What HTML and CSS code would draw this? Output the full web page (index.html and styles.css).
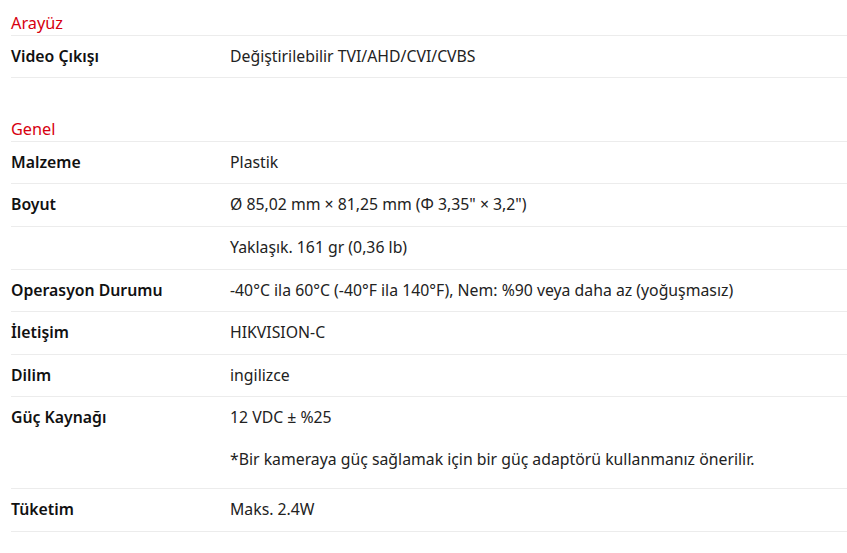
FILE: index.html
```html
<!DOCTYPE html>
<html lang="tr">
<head>
<meta charset="utf-8">
<link rel="stylesheet" href="styles.css">
</head>
<body>
<div class="specs">
  <section class="group">
    <h3 class="group-title">Arayüz</h3>
    <div class="row"><div class="label">Video Çıkışı</div><div class="value"><p>Değiştirilebilir TVI/AHD/CVI/CVBS</p></div></div>
  </section>
  <section class="group">
    <h3 class="group-title">Genel</h3>
    <div class="row"><div class="label">Malzeme</div><div class="value"><p>Plastik</p></div></div>
    <div class="row"><div class="label">Boyut</div><div class="value"><p>Ø 85,02 mm × 81,25 mm (Φ 3,35" × 3,2")</p></div></div>
    <div class="row"><div class="label"></div><div class="value"><p>Yaklaşık. 161 gr (0,36 lb)</p></div></div>
    <div class="row"><div class="label">Operasyon Durumu</div><div class="value"><p>-40°C ila 60°C (-40°F ila 140°F), Nem: %90 veya daha az (yoğuşmasız)</p></div></div>
    <div class="row"><div class="label">İletişim</div><div class="value"><p>HIKVISION-C</p></div></div>
    <div class="row"><div class="label">Dilim</div><div class="value"><p>ingilizce</p></div></div>
    <div class="row multi"><div class="label">Güç Kaynağı</div><div class="value"><p>12 VDC ± %25</p><p>*Bir kameraya güç sağlamak için bir güç adaptörü kullanmanız önerilir.</p></div></div>
    <div class="row"><div class="label">Tüketim</div><div class="value"><p>Maks. 2.4W</p></div></div>
  </section>
</div>
</body>
</html>
```
FILE: styles.css
```css
html, body {
  margin: 0;
  padding: 0;
  background: #fff;
}
body {
  font-family: "Noto Sans", "Open Sans", "DejaVu Sans", sans-serif;
  font-size: 15.8px;
  line-height: 21.6px;
  color: #1a1a1a;
}
.specs {
  padding: 13px 0 0 11px;
}
.group + .group {
  margin-top: 41px;
}
.group-title {
  margin: 0;
  font-size: 16.3px;
  font-weight: 400;
  line-height: 21.6px;
  color: #d7000f;
  border-bottom: 1px solid #ececec;
}
.row {
  display: flex;
  border-bottom: 1px solid #ececec;
  padding: 10px 0;
}
.label {
  width: 219px;
  flex: none;
  font-weight: 600;
  color: #111;
}
.value {
  flex: 1;
  color: #222;
}
.value p {
  margin: 0;
}
.multi .value p + p {
  margin-top: 20.4px;
}
.multi {
  padding-bottom: 17px;
}
```
